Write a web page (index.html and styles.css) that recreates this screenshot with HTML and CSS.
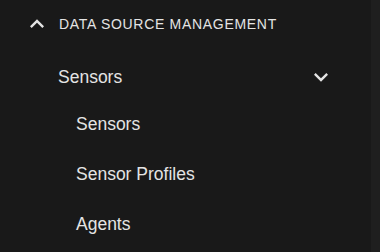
FILE: index.html
```html
<!DOCTYPE html>
<html lang="en">
<head>
    <meta charset="UTF-8">
    <meta name="viewport" content="width=device-width, initial-scale=1.0">
    <title>Data Source Management</title>
    <link rel="stylesheet" href="styles.css">
</head>
<body>
    <div class="layout">
        <nav class="side-nav">
            <div class="nav-section">
                <div class="section-header">
                    <svg class="chevron" viewBox="0 0 24 24"><path d="M12 8l-6 6 1.41 1.41L12 10.83l4.59 4.58L18 14z"/></svg>
                    <span class="section-title">Data Source Management</span>
                </div>

                <div class="nav-group">
                    <div class="group-header">
                        <span class="group-title">Sensors</span>
                        <svg class="chevron" viewBox="0 0 24 24"><path d="M16.59 8.59L12 13.17 7.41 8.59 6 10l6 6 6-6z"/></svg>
                    </div>
                    <ul class="group-items">
                        <li class="nav-item">Sensors</li>
                        <li class="nav-item">Sensor Profiles</li>
                        <li class="nav-item">Agents</li>
                    </ul>
                </div>
            </div>
        </nav>
        <div class="scroll-track"></div>
    </div>
</body>
</html>
```

FILE: styles.css
```css
:root {
    --bg-color: #191919;
    --track-color: #1f1f1f;
    --text-color: #e4e4e4;
}

* {
    margin: 0;
    padding: 0;
    box-sizing: border-box;
}

body {
    font-family: 'Liberation Sans', Arial, sans-serif;
    background: var(--bg-color);
    color: var(--text-color);
    height: 100vh;
    overflow: hidden;
}

.layout {
    display: flex;
    height: 100%;
}

.side-nav {
    width: 371px;
    background: var(--bg-color);
}

.scroll-track {
    flex: 1;
    background: var(--track-color);
}

.chevron {
    width: 28px;
    height: 28px;
    fill: var(--text-color);
    flex-shrink: 0;
}

.section-header {
    display: flex;
    align-items: center;
    gap: 8px;
    height: 48px;
    padding-left: 23px;
}

.section-title {
    font-size: 14px;
    text-transform: uppercase;
    letter-spacing: 0.7px;
}

.group-header {
    display: flex;
    align-items: center;
    justify-content: space-between;
    height: 44px;
    margin-top: 7px;
    padding: 0 36px 0 58px;
}

.group-title {
    font-size: 17.5px;
}

.group-items {
    list-style: none;
}

.nav-item {
    display: flex;
    align-items: center;
    height: 50px;
    padding-left: 76px;
    font-size: 17.5px;
}
```
